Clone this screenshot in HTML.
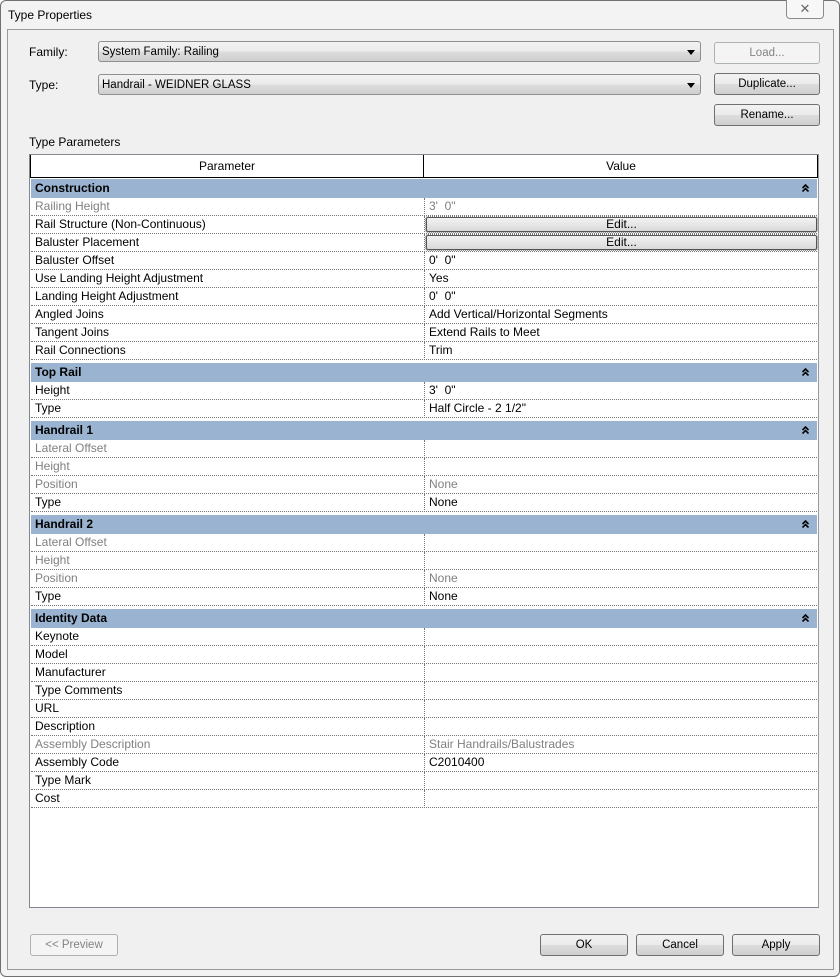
<!DOCTYPE html>
<html><head><meta charset="utf-8"><style>
*{box-sizing:border-box;margin:0;padding:0}
body{width:840px;height:977px;background:#fff;font-family:"Liberation Sans",sans-serif;font-size:12px;color:#000;position:relative;overflow:hidden}
.win{position:absolute;left:0;top:0;width:840px;height:977px;box-shadow:inset 0 0 0 1px #707070;border-radius:6px;background:#f3f3f3}
.inner{position:absolute;left:7px;top:29px;width:827px;height:941px;border:1px solid #9a9a9a;background:#f0f0f0}
.title{position:absolute;left:8px;top:8px;font-size:12px}
.close{position:absolute;left:786px;top:0;width:38px;height:19px;border:1px solid #8a8a8a;border-top:none;border-radius:0 0 4px 4px;background:#f7f7f7;text-align:center;font-size:13px;color:#666;line-height:17px}
.lbl{position:absolute;font-size:12px}
.combo{position:absolute;left:98px;width:603px;height:21px;border:1px solid #8e8f8f;border-radius:3px;background:linear-gradient(#f2f2f2,#ebebeb 50%,#dddddd 51%,#cfcfcf);padding:4px 0 0 3px;font-size:11.5px}
.combo:after{content:"";position:absolute;right:5px;top:8px;border-left:4px solid transparent;border-right:4px solid transparent;border-top:5px solid #000}
.btn{position:absolute;height:22px;border:1px solid #707070;border-radius:3px;background:linear-gradient(#f2f2f2,#ebebeb 50%,#dddddd 51%,#cfcfcf);text-align:center;line-height:20px;font-size:11.5px}
.btn.dis{border-color:#adb2b5;background:#f4f4f4;color:#838383}
.tbl{position:absolute;left:29px;top:154px;width:790px;height:754px;border:1px solid #828790;border-right-color:#9a9a9a;background:#fff}
.hdr{position:absolute;left:0;top:0;width:788px;height:23px;border:1px solid #000;border-top:none}
.hdr div{position:absolute;top:0;height:22px;line-height:22px;text-align:center}
.rows{position:absolute;left:1px;top:24px;width:786px}
.r{height:18px;position:relative;border-bottom:1px dotted #777;line-height:17px;white-space:nowrap}
.r span{position:absolute;left:4px}
.r .v{position:absolute;left:393px;top:0;height:18px;border-left:1px dotted #777;padding-left:4px;width:393px}
.g{height:19px;background:#9ab3d0;font-weight:bold;line-height:18px;padding-left:4px;position:relative}
.g svg{position:absolute;right:8px;top:5px}
.gap{height:3px}
.gr{color:#808080}
.ed{position:absolute;left:395px;top:1px;width:391px;height:15px;border:1px solid #555;border-radius:2px;background:linear-gradient(#f2f2f2,#e6e6e6 50%,#d8d8d8);text-align:center;line-height:13px;outline:1px dotted #777}
</style></head><body>
<svg width="0" height="0" style="position:absolute"><defs><symbol id="ch" viewBox="0 0 7 8"><path d="M0.5 4L3.5 1L6.5 4M0.5 7.5L3.5 4.5L6.5 7.5" fill="none" stroke="#000" stroke-width="1.6"/></symbol></defs></svg>
<div class="win">
<div class="title">Type Properties</div>
<div class="close">✕</div>
<div class="inner"></div>
<div class="lbl" style="left:29px;top:45px">Family:</div>
<div class="lbl" style="left:29px;top:78px">Type:</div>
<div class="combo" style="top:41px">System Family: Railing</div>
<div class="combo" style="top:74px">Handrail - WEIDNER GLASS</div>
<div class="btn dis" style="left:714px;top:42px;width:106px">Load...</div>
<div class="btn" style="left:714px;top:73px;width:106px">Duplicate...</div>
<div class="btn" style="left:714px;top:104px;width:106px">Rename...</div>
<div class="lbl" style="left:29px;top:135px">Type Parameters</div>
<div class="tbl">
<div class="hdr"><div style="left:0;width:393px;border-right:1px solid #000">Parameter</div><div style="left:393px;width:394px">Value</div></div>
<div class="rows">
<div class="g">Construction<svg width="7" height="8"><use href="#ch"/></svg></div>
<div class="r gr"><span>Railing Height</span><div class="v">3'&nbsp; 0"</div></div>
<div class="r"><span>Rail Structure (Non-Continuous)</span><div class="v"></div><div class="ed">Edit...</div></div>
<div class="r"><span>Baluster Placement</span><div class="v"></div><div class="ed">Edit...</div></div>
<div class="r"><span>Baluster Offset</span><div class="v">0'&nbsp; 0"</div></div>
<div class="r"><span>Use Landing Height Adjustment</span><div class="v">Yes</div></div>
<div class="r"><span>Landing Height Adjustment</span><div class="v">0'&nbsp; 0"</div></div>
<div class="r"><span>Angled Joins</span><div class="v">Add Vertical/Horizontal Segments</div></div>
<div class="r"><span>Tangent Joins</span><div class="v">Extend Rails to Meet</div></div>
<div class="r"><span>Rail Connections</span><div class="v">Trim</div></div>
<div class="gap"></div>
<div class="g">Top Rail<svg width="7" height="8"><use href="#ch"/></svg></div>
<div class="r"><span>Height</span><div class="v">3'&nbsp; 0"</div></div>
<div class="r"><span>Type</span><div class="v">Half Circle - 2 1/2"</div></div>
<div class="gap"></div>
<div class="g">Handrail 1<svg width="7" height="8"><use href="#ch"/></svg></div>
<div class="r gr"><span>Lateral Offset</span><div class="v"></div></div>
<div class="r gr"><span>Height</span><div class="v"></div></div>
<div class="r gr"><span>Position</span><div class="v">None</div></div>
<div class="r"><span>Type</span><div class="v">None</div></div>
<div class="gap"></div>
<div class="g">Handrail 2<svg width="7" height="8"><use href="#ch"/></svg></div>
<div class="r gr"><span>Lateral Offset</span><div class="v"></div></div>
<div class="r gr"><span>Height</span><div class="v"></div></div>
<div class="r gr"><span>Position</span><div class="v">None</div></div>
<div class="r"><span>Type</span><div class="v">None</div></div>
<div class="gap"></div>
<div class="g">Identity Data<svg width="7" height="8"><use href="#ch"/></svg></div>
<div class="r"><span>Keynote</span><div class="v"></div></div>
<div class="r"><span>Model</span><div class="v"></div></div>
<div class="r"><span>Manufacturer</span><div class="v"></div></div>
<div class="r"><span>Type Comments</span><div class="v"></div></div>
<div class="r"><span>URL</span><div class="v"></div></div>
<div class="r"><span>Description</span><div class="v"></div></div>
<div class="r gr"><span>Assembly Description</span><div class="v">Stair Handrails/Balustrades</div></div>
<div class="r"><span>Assembly Code</span><div class="v">C2010400</div></div>
<div class="r"><span>Type Mark</span><div class="v"></div></div>
<div class="r"><span>Cost</span><div class="v"></div></div>
</div>
</div>
<div class="btn dis" style="left:30px;top:934px;width:88px">&lt;&lt; Preview</div>
<div class="btn" style="left:540px;top:934px;width:88px">OK</div>
<div class="btn" style="left:636px;top:934px;width:88px">Cancel</div>
<div class="btn" style="left:732px;top:934px;width:88px">Apply</div>
</div>
</body></html>
